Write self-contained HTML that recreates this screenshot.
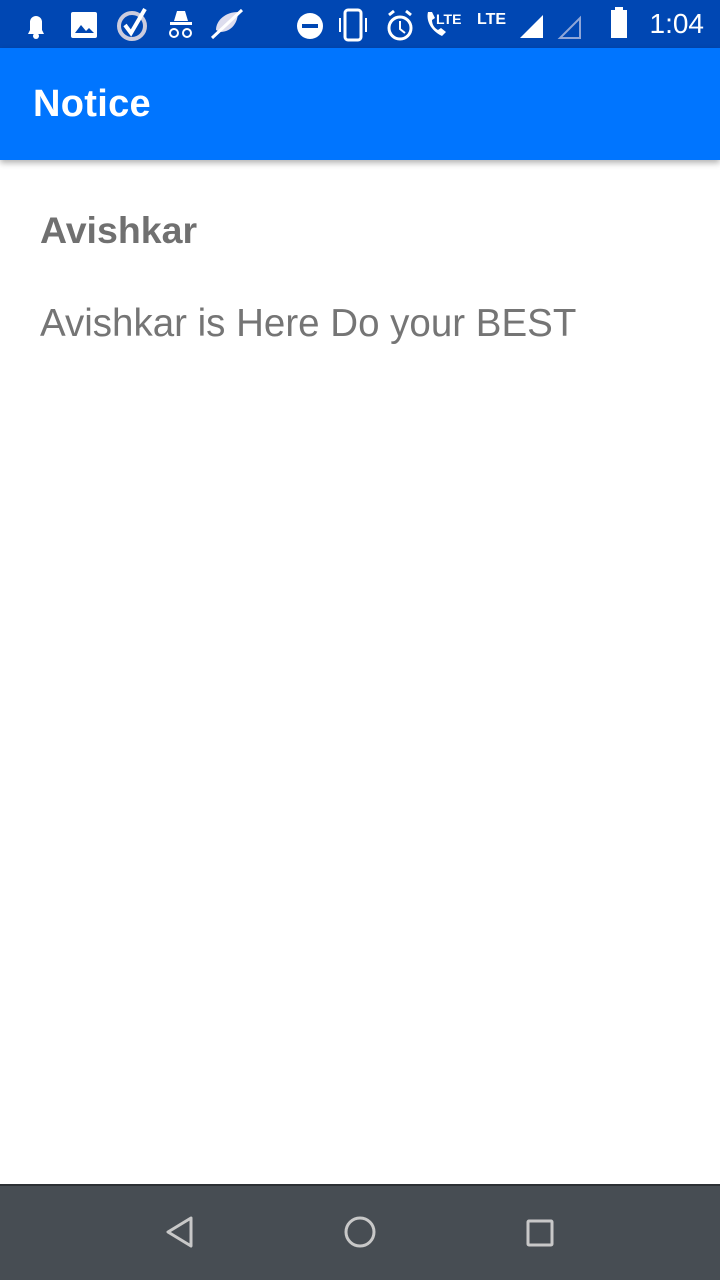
<!DOCTYPE html>
<html><head><meta charset="utf-8"><style>
html,body{margin:0;padding:0;width:720px;height:1280px;overflow:hidden;background:#fff;font-family:"Liberation Sans",sans-serif;position:relative}
.sb{position:absolute;left:0;top:0;width:720px;height:48px;background:#0047b3;color:#fff}
.ab{position:absolute;left:0;top:48px;width:720px;height:112px;background:#0075ff;box-shadow:0 3px 6px rgba(0,0,0,.3)}
.ab span{position:absolute;left:33px;top:36px;font-size:38px;font-weight:bold;color:#fff;line-height:40px;letter-spacing:0.3px}
.t1{position:absolute;left:40px;top:209px;font-size:37.5px;font-weight:bold;color:#707070;line-height:42px}
.t2{position:absolute;left:40px;top:302px;font-size:38.5px;color:#757575;line-height:44px}
.nb{position:absolute;left:0;top:1184px;width:720px;height:96px;background:#474d53;border-top:2px solid #2c3034;box-sizing:border-box}
.time{position:absolute;right:16px;top:8px;font-size:28px;line-height:32px}
</style></head><body>
<div class="sb">
<svg width="720" height="48" style="position:absolute;left:0;top:0" fill="#fff">
<path d="M28 34 h16 l-2-4 v-8 a6 6 0 0 0-12 0 v8z"/><circle cx="36" cy="36" r="3"/>
<rect x="71" y="12" width="26" height="26" rx="2"/><path d="M75 33 l6-8 5 6 3-3 5 5z" fill="#0047b3"/>
<circle cx="132" cy="26" r="13" fill="none" stroke="#ccd" stroke-width="4"/><path d="M125 25 l6 8 l14-24" fill="none" stroke="#fff" stroke-width="4"/>
<path d="M170 22 h22 v3 h-22z M174 21 l3-10 h8 l3 10z"/><circle cx="174" cy="33" r="4" fill="none" stroke="#fff" stroke-width="2"/><circle cx="187" cy="33" r="4" fill="none" stroke="#fff" stroke-width="2"/>
<path d="M216 30 c0-10 10-18 22-18 c0 10-6 20-18 20z" fill="#dde"/><path d="M212 38 l30-28" stroke="#fff" stroke-width="3"/>
<circle cx="310" cy="26" r="13"/><rect x="302" y="24" width="16" height="4" fill="#0047b3"/>
<rect x="345" y="10" width="16" height="30" rx="3" fill="none" stroke="#fff" stroke-width="3"/><rect x="339" y="18" width="2" height="14"/><rect x="365" y="18" width="2" height="14"/>
<circle cx="400" cy="28" r="11" fill="none" stroke="#fff" stroke-width="3"/><path d="M400 21 v8 l5 4" fill="none" stroke="#fff" stroke-width="2"/><path d="M389 15 l5-4 M411 15 l-5-4" stroke="#fff" stroke-width="3"/>
<path d="M428 12 c-2 8 2 18 14 24 l4-4 -5-4 -3 2 c-4-2-6-6-6-10 l3-2 -3-6z"/>
<text x="436" y="24" font-size="14" font-weight="bold" font-family="Liberation Sans">LTE</text>
<text x="477" y="24" font-size="16" font-weight="bold" font-family="Liberation Sans">LTE</text>
<path d="M520 38 h23 v-23z"/><path d="M560 38 h20 v-20z" fill="none" stroke="#8fa6d8" stroke-width="2"/>
<rect x="611" y="10" width="16" height="28"/><rect x="615" y="7" width="8" height="4"/>
</svg>
<div class="time">1:04</div>
</div>
<div class="ab"><span>Notice</span></div>
<div class="t1">Avishkar</div>
<div class="t2">Avishkar is Here Do your BEST</div>
<div class="nb">
<svg width="720" height="94" style="position:absolute;left:0;top:0" fill="none" stroke="#c8c8c8" stroke-width="3">
<path d="M191 32 L168 46 L191 60 Z" stroke-linejoin="round"/>
<circle cx="360" cy="46" r="14"/>
<rect x="528" y="35" width="24" height="24" rx="1"/>
</svg>
</div>
</body></html>
